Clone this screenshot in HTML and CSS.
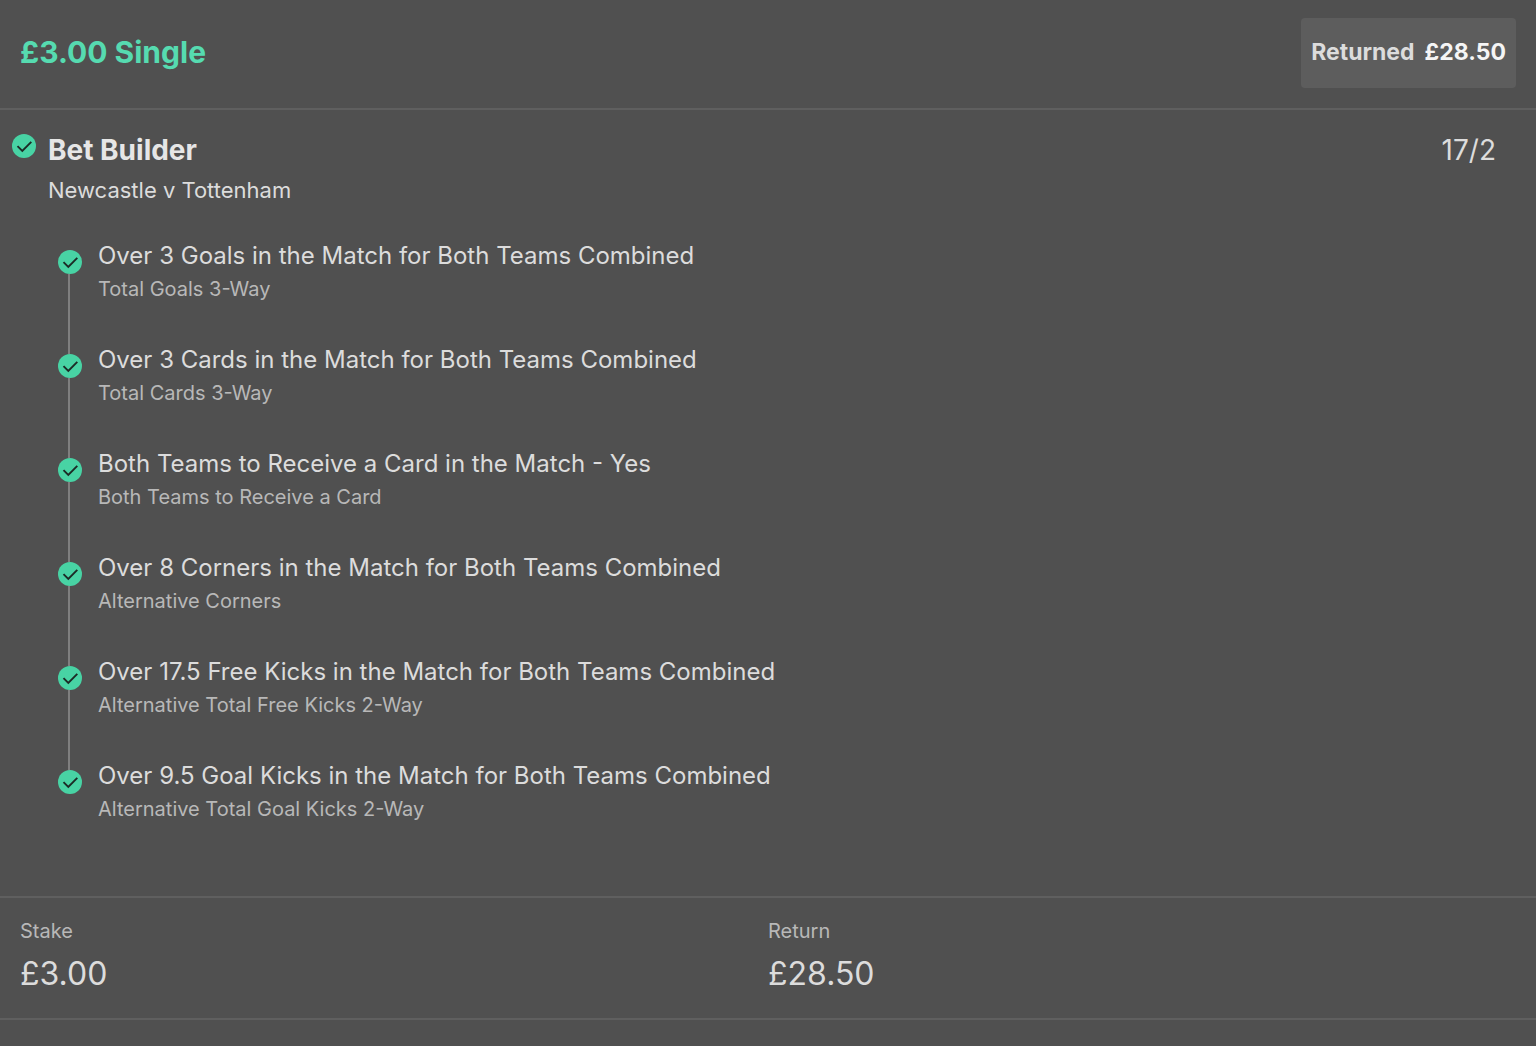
FILE: index.html
```html
<!DOCTYPE html>
<html lang="en">
<head>
    <meta charset="UTF-8">
    <meta name="viewport" content="width=device-width, initial-scale=1">
    <title>My Bets</title>
    <link rel="stylesheet" href="styles.css">
</head>
<body>
    <svg class="defs" aria-hidden="true">
        <symbol id="tick" viewBox="0 0 24 24">
            <circle cx="12" cy="12" r="12" fill="#48d3a4"/>
            <path d="M5.5 12.2l4.8 4.8L19.3 7.9" fill="none" stroke="#1c2b26" stroke-width="1.9"/>
        </symbol>
    </svg>

    <main class="bet">
        <header class="bet-header">
            <h1 class="bet-title">£3.00 Single</h1>
            <div class="returned">
                <span>Returned</span>
                <span class="returned-amount">£28.50</span>
            </div>
        </header>

        <section class="builder">
            <div class="builder-header">
                <svg class="tick"><use href="#tick"/></svg>
                <div class="builder-info">
                    <h2 class="builder-title">Bet Builder</h2>
                    <p class="fixture">Newcastle v Tottenham</p>
                </div>
                <span class="odds">17/2</span>
            </div>

            <ul class="legs">
                <li class="leg">
                    <div class="marker"><svg class="tick"><use href="#tick"/></svg></div>
                    <div class="leg-text">
                        <h3 class="leg-name">Over 3 Goals in the Match for Both Teams Combined</h3>
                        <p class="leg-market">Total Goals 3-Way</p>
                    </div>
                </li>
                <li class="leg">
                    <div class="marker"><svg class="tick"><use href="#tick"/></svg></div>
                    <div class="leg-text">
                        <h3 class="leg-name">Over 3 Cards in the Match for Both Teams Combined</h3>
                        <p class="leg-market">Total Cards 3-Way</p>
                    </div>
                </li>
                <li class="leg">
                    <div class="marker"><svg class="tick"><use href="#tick"/></svg></div>
                    <div class="leg-text">
                        <h3 class="leg-name">Both Teams to Receive a Card in the Match - Yes</h3>
                        <p class="leg-market">Both Teams to Receive a Card</p>
                    </div>
                </li>
                <li class="leg">
                    <div class="marker"><svg class="tick"><use href="#tick"/></svg></div>
                    <div class="leg-text">
                        <h3 class="leg-name">Over 8 Corners in the Match for Both Teams Combined</h3>
                        <p class="leg-market">Alternative Corners</p>
                    </div>
                </li>
                <li class="leg">
                    <div class="marker"><svg class="tick"><use href="#tick"/></svg></div>
                    <div class="leg-text">
                        <h3 class="leg-name">Over 17.5 Free Kicks in the Match for Both Teams Combined</h3>
                        <p class="leg-market">Alternative Total Free Kicks 2-Way</p>
                    </div>
                </li>
                <li class="leg">
                    <div class="marker"><svg class="tick"><use href="#tick"/></svg></div>
                    <div class="leg-text">
                        <h3 class="leg-name">Over 9.5 Goal Kicks in the Match for Both Teams Combined</h3>
                        <p class="leg-market">Alternative Total Goal Kicks 2-Way</p>
                    </div>
                </li>
            </ul>
        </section>

        <dl class="totals">
            <div class="total">
                <dt>Stake</dt>
                <dd>£3.00</dd>
            </div>
            <div class="total">
                <dt>Return</dt>
                <dd>£28.50</dd>
            </div>
        </dl>
    </main>
</body>
</html>
```

FILE: styles.css
```css
*{
    margin: 0;
    padding: 0;
    box-sizing: border-box;
}
body{
    background: #505050;
    color: #dcdcdc;
    font-family: Inter, "Liberation Sans", sans-serif;
}
ul{
    list-style: none;
}
.defs{
    display: none;
}
.tick{
    display: block;
    flex: none;
    width: 24px;
    height: 24px;
}

/* header */
.bet-header{
    display: flex;
    justify-content: space-between;
    align-items: flex-start;
    padding: 18px 20px 20px;
    border-bottom: 2px solid #5f5f5f;
}
.bet-title{
    color: #56dbb0;
    font-size: 30px;
    line-height: 68px;
    font-weight: 700;
}
.returned{
    display: flex;
    gap: 10px;
    padding: 20px 10px 22px;
    border-radius: 4px;
    background: #5d5d5d;
    font-size: 23px;
    line-height: 28px;
    font-weight: 700;
}
.returned-amount{
    color: #f5f5f5;
}

/* bet builder */
.builder{
    padding-bottom: 32px;
    border-bottom: 2px solid #5f5f5f;
}
.builder-header{
    display: flex;
    gap: 12px;
    padding: 24px 40px 0 12px;
}
.builder-info{
    flex: 1;
}
.builder-title{
    color: #e6e6e6;
    font-size: 28px;
    line-height: 32px;
    font-weight: 700;
}
.fixture{
    margin-top: 10px;
    font-size: 22px;
    line-height: 28px;
}
.odds{
    font-size: 28px;
    line-height: 32px;
}

/* legs */
.legs{
    padding: 36px 20px 0 58px;
}
.leg{
    display: flex;
    gap: 16px;
}
.marker{
    display: flex;
    flex-direction: column;
    padding-top: 10px;
    margin-bottom: -10px;
}
/* line down to the next tick */
.leg:not(:last-child) .marker::after{
    content: "";
    flex: 1;
    width: 2px;
    margin-left: 10px;
    background: #7f7f7f;
}
.leg-text{
    padding-bottom: 38px;
}
.leg-name{
    font-size: 24px;
    line-height: 32px;
    font-weight: 400;
}
.leg-market{
    color: #b8b8b8;
    font-size: 20px;
    line-height: 34px;
}

/* stake and return */
.totals{
    display: grid;
    grid-template-columns: 1fr 1fr;
    padding: 20px 20px 24px;
    border-bottom: 2px solid #5f5f5f;
}
.total dt{
    color: #b8b8b8;
    font-size: 20px;
    line-height: 26px;
}
.total dd{
    margin-top: 10px;
    font-size: 32px;
    line-height: 40px;
}
```
